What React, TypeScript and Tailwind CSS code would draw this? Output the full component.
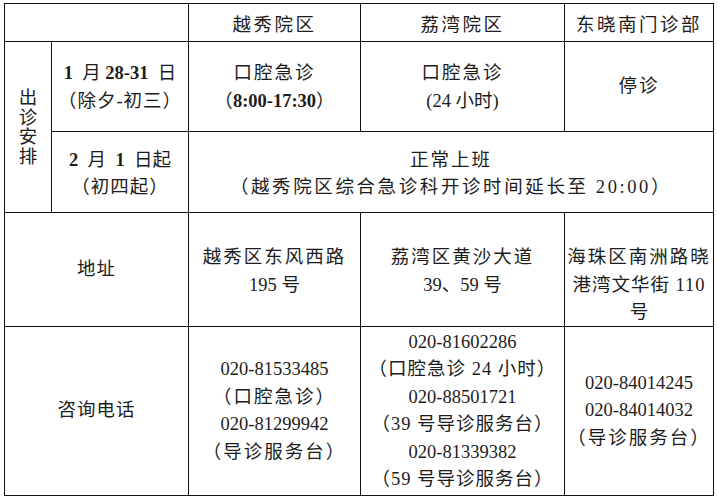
import React from 'react';

const cell = "bg-white flex flex-col items-center justify-center text-center";

export default function App() {
  return (
    <div className="min-h-screen bg-white pt-[3px] pl-[4px] text-[#1c1c1c] text-[18.5px] leading-[27.5px] font-['Liberation_Serif','Noto_Sans_CJK_SC',serif]">
      <div className="grid w-fit bg-[#111] p-px gap-px grid-cols-[46px_136px_171px_203px_148px] grid-rows-[37px_89px_80px_113px_168px]">
        {/* header */}
        <div className="col-span-2 bg-white" />
        <div className={cell + " tracking-[2.5px] pt-[6px]"}>越秀院区</div>
        <div className={cell + " tracking-[2.5px] pt-[6px]"}>荔湾院区</div>
        <div className={cell + " tracking-[2.5px] pt-[6px]"}>东晓南门诊部</div>

        {/* 出诊安排 */}
        <div className={cell + " row-span-2 leading-[19.5px] pt-[2px]"}>
          <span>出</span>
          <span>诊</span>
          <span>安</span>
          <span>排</span>
        </div>
        <div className={cell + " pt-[2px]"}>
          <div className="whitespace-pre"><b>1</b>  月 <b>28-31</b>  日</div>
          <div className="tracking-[1px]">（除夕-初三）</div>
        </div>
        <div className={cell + " pt-[2px]"}>
          <div className="tracking-[2px]">口腔急诊</div>
          <div>（<b>8:00-17:30</b>）</div>
        </div>
        <div className={cell + " pt-[2px]"}>
          <div className="tracking-[2px]">口腔急诊</div>
          <div>(24 小时)</div>
        </div>
        <div className={cell + " tracking-[2px]"}>停诊</div>

        <div className={cell + " pt-[4px]"}>
          <div className="whitespace-pre"><b>2</b>  月  <b>1</b>  日起</div>
          <div className="tracking-[1px]">（初四起）</div>
        </div>
        <div className={cell + " col-span-3 pt-[4px]"}>
          <div className="tracking-[2px]">正常上班</div>
          <div className="tracking-[2.6px]">（越秀院区综合急诊科开诊时间延长至 20:00）</div>
        </div>

        {/* 地址 */}
        <div className={cell + " col-span-2 tracking-[1px]"}>地址</div>
        <div className="bg-white flex flex-col items-center text-center pt-[31px]">
          <div className="tracking-[2px]">越秀区东风西路</div>
          <div>195 号</div>
        </div>
        <div className="bg-white flex flex-col items-center text-center pt-[31px]">
          <div className="tracking-[2px]">荔湾区黄沙大道</div>
          <div>39、59 号</div>
        </div>
        <div className="bg-white flex flex-col items-center text-center pt-[31px]">
          <div className="tracking-[2px]">海珠区南洲路晓</div>
          <div className="tracking-[1px]">港湾文华街 110</div>
          <div>号</div>
        </div>

        {/* 咨询电话 */}
        <div className={cell + " col-span-2 tracking-[1px]"}>咨询电话</div>
        <div className={cell}>
          <div>020-81533485</div>
          <div className="tracking-[2px]">（口腔急诊）</div>
          <div>020-81299942</div>
          <div className="tracking-[2px]">（导诊服务台）</div>
        </div>
        <div className={cell}>
          <div>020-81602286</div>
          <div className="tracking-[1px]">（口腔急诊 24 小时）</div>
          <div>020-88501721</div>
          <div className="tracking-[1px]">（39 号导诊服务台）</div>
          <div>020-81339382</div>
          <div className="tracking-[1px]">（59 号导诊服务台）</div>
        </div>
        <div className={cell}>
          <div>020-84014245</div>
          <div>020-84014032</div>
          <div className="tracking-[2px]">（导诊服务台）</div>
        </div>
      </div>
    </div>
  );
}
